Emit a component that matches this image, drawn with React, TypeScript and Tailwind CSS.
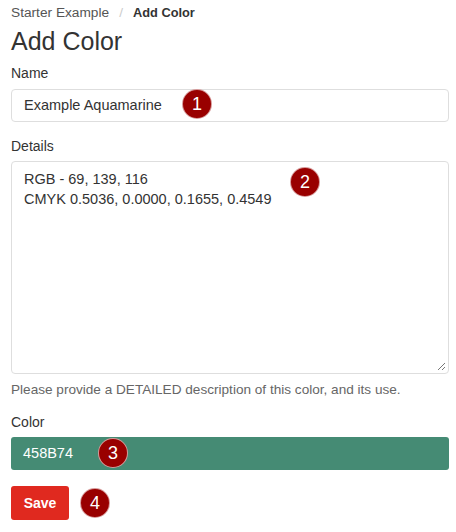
import React from 'react';

const Badge = ({ n, className }: { n: number; className: string }) => (
  <span
    className={`absolute flex items-center justify-center w-[30px] h-[30px] rounded-full bg-[#990000] text-white text-[18px] leading-none border border-white/60 ${className}`}
  >
    {n}
  </span>
);

export default function App() {
  return (
    <div className="relative w-[456px] h-[532px] bg-white pl-[11px] pr-[7px] text-[#333] font-['Liberation_Sans',Arial,sans-serif]">
      <nav className="flex items-center gap-[10px] pt-[3px] text-[13.7px] leading-[20px]">
        <span className="text-[#555]">Starter Example</span>
        <span className="text-[#ccc]">/</span>
        <span className="font-bold text-[12.8px] text-[#333]">Add Color</span>
      </nav>
      <h1 className="text-[25px] leading-[36px] text-[#333]">Add Color</h1>

      <div className="relative mt-[5px]">
        <label className="block text-[14px] leading-[18px] mb-[7px]">Name</label>
        <div className="h-[33px] rounded border border-[#dedede] px-[12px] flex items-center text-[14.5px]">
          Example Aquamarine
        </div>
        <Badge n={1} className="left-[171px] top-[25px]" />
      </div>

      <div className="relative mt-[15px]">
        <label className="block text-[14px] leading-[18px] mb-[6px]">Details</label>
        <div className="relative h-[213px] rounded border border-[#dedede] px-[12px] pt-[7px] text-[14.5px] leading-[20px]">
          <div>RGB - 69, 139, 116</div>
          <div>CMYK 0.5036, 0.0000, 0.1655, 0.4549</div>
          <svg className="absolute right-[2px] bottom-[2px]" width="10" height="10" viewBox="0 0 10 10">
            <path d="M9 2 L2 9 M9 6 L6 9" stroke="#777" strokeWidth="1" />
          </svg>
        </div>
        <Badge n={2} className="left-[279px] top-[30px]" />
        <p className="mt-[7px] text-[13.6px] leading-[18px] text-[#666]">
          Please provide a DETAILED description of this color, and its use.
        </p>
      </div>

      <div className="relative mt-[14px]">
        <label className="block text-[14px] leading-[18px] mb-[6px]">Color</label>
        <div className="h-[33px] rounded-[3px] bg-[#458B74] px-[12px] flex items-center text-[14.5px] text-white">
          458B74
        </div>
        <Badge n={3} className="left-[87px] top-[25px]" />
      </div>

      <div className="relative mt-[16px] flex items-center">
        <button className="h-[34px] w-[58px] rounded-[3px] bg-[#e0291f] text-white text-[14px] font-bold">Save</button>
        <Badge n={4} className="left-[69px] top-[2px]" />
      </div>
    </div>
  );
}
